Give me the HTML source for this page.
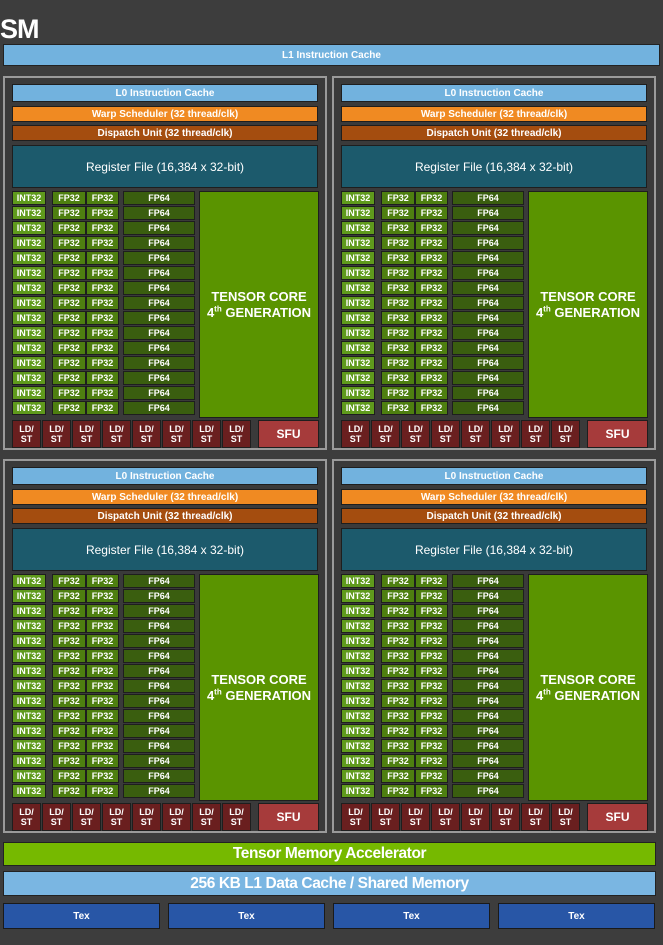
<!DOCTYPE html>
<html><head><meta charset="utf-8"><style>
*{margin:0;padding:0;box-sizing:border-box}
body{width:663px;height:945px;background:#3d3d3d;position:relative;overflow:hidden;font-family:"Liberation Sans",Arial,sans-serif;color:#fff;font-weight:bold}
.a{position:absolute;display:flex;align-items:center;justify-content:center;text-align:center}
.sm{left:0;top:14px;font-size:27px;color:#fff;letter-spacing:-1px}
.l1{left:3px;top:44px;width:657px;height:22px;background:#72b2de;border:1px solid #222;font-size:10px}
.p{position:absolute;width:324px;height:374px;border:2px solid #9a9a9a;background:#3a3a3a}
.p .a{border:1px solid #1e1e1e}
.l0{left:7px;top:6px;width:306px;height:18px;background:#72b2de;font-size:10px}
.ws{left:7px;top:28px;width:306px;height:16px;background:#f08a22;font-size:10px}
.du{left:7px;top:47px;width:306px;height:16px;background:#a44d0f;font-size:10px}
.rf{left:7px;top:67px;width:306px;height:43px;background:#1c5a6c;font-size:12px;font-weight:normal}
.tc{left:194px;top:113px;width:120px;height:227px;background:#5a9400;font-size:13px;line-height:16px}
.tc span{display:block}
.tc sup{font-size:8px;line-height:0}
.g{position:absolute;left:7px;top:113px;display:grid;grid-template-columns:40px 34px 37px 72px;grid-template-rows:repeat(15,14px);row-gap:1px;column-gap:0;background:#3a3a3a}
.g span{display:flex;align-items:center;justify-content:center;font-size:9px;border:1px solid #1e1e1e}
.g .i{background:#5f9a1c;margin-right:6px}
.g .f{background:#4e7f10}
.g .f2{background:#4e7f10;margin-right:4px}
.g .d{background:#3a5e0f}
.ls{top:342px;width:29px;height:28px;background:#6a1f1f;font-size:9px;line-height:10px}
.sfu{left:253px;top:342px;width:61px;height:28px;background:#a63b3b;font-size:12px}
.tma{left:3px;top:842px;width:653px;height:24px;background:#76b900;font-size:15.5px;letter-spacing:-0.4px}
.dc{left:3px;top:871px;width:653px;height:25px;background:#7ab6e2;font-size:15.5px;letter-spacing:-0.4px}
.tx{top:903px;width:157px;height:26px;background:#2856a6;border:1px solid #1a1a1a;font-size:10px}
</style></head><body>
<div class="a sm">SM</div>
<div class="a l1">L1 Instruction Cache</div>

<div class="p" style="left:3px;top:76px">
<div class="a l0">L0 Instruction Cache</div><div class="a ws">Warp Scheduler (32 thread/clk)</div><div class="a du">Dispatch Unit (32 thread/clk)</div><div class="a rf">Register File (16,384 x 32-bit)</div>
<div class="g">
<span class="i">INT32</span><span class="f">FP32</span><span class="f2">FP32</span><span class="d">FP64</span>
<span class="i">INT32</span><span class="f">FP32</span><span class="f2">FP32</span><span class="d">FP64</span>
<span class="i">INT32</span><span class="f">FP32</span><span class="f2">FP32</span><span class="d">FP64</span>
<span class="i">INT32</span><span class="f">FP32</span><span class="f2">FP32</span><span class="d">FP64</span>
<span class="i">INT32</span><span class="f">FP32</span><span class="f2">FP32</span><span class="d">FP64</span>
<span class="i">INT32</span><span class="f">FP32</span><span class="f2">FP32</span><span class="d">FP64</span>
<span class="i">INT32</span><span class="f">FP32</span><span class="f2">FP32</span><span class="d">FP64</span>
<span class="i">INT32</span><span class="f">FP32</span><span class="f2">FP32</span><span class="d">FP64</span>
<span class="i">INT32</span><span class="f">FP32</span><span class="f2">FP32</span><span class="d">FP64</span>
<span class="i">INT32</span><span class="f">FP32</span><span class="f2">FP32</span><span class="d">FP64</span>
<span class="i">INT32</span><span class="f">FP32</span><span class="f2">FP32</span><span class="d">FP64</span>
<span class="i">INT32</span><span class="f">FP32</span><span class="f2">FP32</span><span class="d">FP64</span>
<span class="i">INT32</span><span class="f">FP32</span><span class="f2">FP32</span><span class="d">FP64</span>
<span class="i">INT32</span><span class="f">FP32</span><span class="f2">FP32</span><span class="d">FP64</span>
<span class="i">INT32</span><span class="f">FP32</span><span class="f2">FP32</span><span class="d">FP64</span>
</div>
<div class="a tc"><span>TENSOR CORE<br>4<sup>th</sup> GENERATION</span></div>
<div class="a ls" style="left:7px">LD/<br>ST</div><div class="a ls" style="left:37px">LD/<br>ST</div><div class="a ls" style="left:67px">LD/<br>ST</div><div class="a ls" style="left:97px">LD/<br>ST</div><div class="a ls" style="left:127px">LD/<br>ST</div><div class="a ls" style="left:157px">LD/<br>ST</div><div class="a ls" style="left:187px">LD/<br>ST</div><div class="a ls" style="left:217px">LD/<br>ST</div>
<div class="a sfu">SFU</div>
</div>

<div class="p" style="left:332px;top:76px">
<div class="a l0">L0 Instruction Cache</div><div class="a ws">Warp Scheduler (32 thread/clk)</div><div class="a du">Dispatch Unit (32 thread/clk)</div><div class="a rf">Register File (16,384 x 32-bit)</div>
<div class="g">
<span class="i">INT32</span><span class="f">FP32</span><span class="f2">FP32</span><span class="d">FP64</span>
<span class="i">INT32</span><span class="f">FP32</span><span class="f2">FP32</span><span class="d">FP64</span>
<span class="i">INT32</span><span class="f">FP32</span><span class="f2">FP32</span><span class="d">FP64</span>
<span class="i">INT32</span><span class="f">FP32</span><span class="f2">FP32</span><span class="d">FP64</span>
<span class="i">INT32</span><span class="f">FP32</span><span class="f2">FP32</span><span class="d">FP64</span>
<span class="i">INT32</span><span class="f">FP32</span><span class="f2">FP32</span><span class="d">FP64</span>
<span class="i">INT32</span><span class="f">FP32</span><span class="f2">FP32</span><span class="d">FP64</span>
<span class="i">INT32</span><span class="f">FP32</span><span class="f2">FP32</span><span class="d">FP64</span>
<span class="i">INT32</span><span class="f">FP32</span><span class="f2">FP32</span><span class="d">FP64</span>
<span class="i">INT32</span><span class="f">FP32</span><span class="f2">FP32</span><span class="d">FP64</span>
<span class="i">INT32</span><span class="f">FP32</span><span class="f2">FP32</span><span class="d">FP64</span>
<span class="i">INT32</span><span class="f">FP32</span><span class="f2">FP32</span><span class="d">FP64</span>
<span class="i">INT32</span><span class="f">FP32</span><span class="f2">FP32</span><span class="d">FP64</span>
<span class="i">INT32</span><span class="f">FP32</span><span class="f2">FP32</span><span class="d">FP64</span>
<span class="i">INT32</span><span class="f">FP32</span><span class="f2">FP32</span><span class="d">FP64</span>
</div>
<div class="a tc"><span>TENSOR CORE<br>4<sup>th</sup> GENERATION</span></div>
<div class="a ls" style="left:7px">LD/<br>ST</div><div class="a ls" style="left:37px">LD/<br>ST</div><div class="a ls" style="left:67px">LD/<br>ST</div><div class="a ls" style="left:97px">LD/<br>ST</div><div class="a ls" style="left:127px">LD/<br>ST</div><div class="a ls" style="left:157px">LD/<br>ST</div><div class="a ls" style="left:187px">LD/<br>ST</div><div class="a ls" style="left:217px">LD/<br>ST</div>
<div class="a sfu">SFU</div>
</div>

<div class="p" style="left:3px;top:459px">
<div class="a l0">L0 Instruction Cache</div><div class="a ws">Warp Scheduler (32 thread/clk)</div><div class="a du">Dispatch Unit (32 thread/clk)</div><div class="a rf">Register File (16,384 x 32-bit)</div>
<div class="g">
<span class="i">INT32</span><span class="f">FP32</span><span class="f2">FP32</span><span class="d">FP64</span>
<span class="i">INT32</span><span class="f">FP32</span><span class="f2">FP32</span><span class="d">FP64</span>
<span class="i">INT32</span><span class="f">FP32</span><span class="f2">FP32</span><span class="d">FP64</span>
<span class="i">INT32</span><span class="f">FP32</span><span class="f2">FP32</span><span class="d">FP64</span>
<span class="i">INT32</span><span class="f">FP32</span><span class="f2">FP32</span><span class="d">FP64</span>
<span class="i">INT32</span><span class="f">FP32</span><span class="f2">FP32</span><span class="d">FP64</span>
<span class="i">INT32</span><span class="f">FP32</span><span class="f2">FP32</span><span class="d">FP64</span>
<span class="i">INT32</span><span class="f">FP32</span><span class="f2">FP32</span><span class="d">FP64</span>
<span class="i">INT32</span><span class="f">FP32</span><span class="f2">FP32</span><span class="d">FP64</span>
<span class="i">INT32</span><span class="f">FP32</span><span class="f2">FP32</span><span class="d">FP64</span>
<span class="i">INT32</span><span class="f">FP32</span><span class="f2">FP32</span><span class="d">FP64</span>
<span class="i">INT32</span><span class="f">FP32</span><span class="f2">FP32</span><span class="d">FP64</span>
<span class="i">INT32</span><span class="f">FP32</span><span class="f2">FP32</span><span class="d">FP64</span>
<span class="i">INT32</span><span class="f">FP32</span><span class="f2">FP32</span><span class="d">FP64</span>
<span class="i">INT32</span><span class="f">FP32</span><span class="f2">FP32</span><span class="d">FP64</span>
</div>
<div class="a tc"><span>TENSOR CORE<br>4<sup>th</sup> GENERATION</span></div>
<div class="a ls" style="left:7px">LD/<br>ST</div><div class="a ls" style="left:37px">LD/<br>ST</div><div class="a ls" style="left:67px">LD/<br>ST</div><div class="a ls" style="left:97px">LD/<br>ST</div><div class="a ls" style="left:127px">LD/<br>ST</div><div class="a ls" style="left:157px">LD/<br>ST</div><div class="a ls" style="left:187px">LD/<br>ST</div><div class="a ls" style="left:217px">LD/<br>ST</div>
<div class="a sfu">SFU</div>
</div>

<div class="p" style="left:332px;top:459px">
<div class="a l0">L0 Instruction Cache</div><div class="a ws">Warp Scheduler (32 thread/clk)</div><div class="a du">Dispatch Unit (32 thread/clk)</div><div class="a rf">Register File (16,384 x 32-bit)</div>
<div class="g">
<span class="i">INT32</span><span class="f">FP32</span><span class="f2">FP32</span><span class="d">FP64</span>
<span class="i">INT32</span><span class="f">FP32</span><span class="f2">FP32</span><span class="d">FP64</span>
<span class="i">INT32</span><span class="f">FP32</span><span class="f2">FP32</span><span class="d">FP64</span>
<span class="i">INT32</span><span class="f">FP32</span><span class="f2">FP32</span><span class="d">FP64</span>
<span class="i">INT32</span><span class="f">FP32</span><span class="f2">FP32</span><span class="d">FP64</span>
<span class="i">INT32</span><span class="f">FP32</span><span class="f2">FP32</span><span class="d">FP64</span>
<span class="i">INT32</span><span class="f">FP32</span><span class="f2">FP32</span><span class="d">FP64</span>
<span class="i">INT32</span><span class="f">FP32</span><span class="f2">FP32</span><span class="d">FP64</span>
<span class="i">INT32</span><span class="f">FP32</span><span class="f2">FP32</span><span class="d">FP64</span>
<span class="i">INT32</span><span class="f">FP32</span><span class="f2">FP32</span><span class="d">FP64</span>
<span class="i">INT32</span><span class="f">FP32</span><span class="f2">FP32</span><span class="d">FP64</span>
<span class="i">INT32</span><span class="f">FP32</span><span class="f2">FP32</span><span class="d">FP64</span>
<span class="i">INT32</span><span class="f">FP32</span><span class="f2">FP32</span><span class="d">FP64</span>
<span class="i">INT32</span><span class="f">FP32</span><span class="f2">FP32</span><span class="d">FP64</span>
<span class="i">INT32</span><span class="f">FP32</span><span class="f2">FP32</span><span class="d">FP64</span>
</div>
<div class="a tc"><span>TENSOR CORE<br>4<sup>th</sup> GENERATION</span></div>
<div class="a ls" style="left:7px">LD/<br>ST</div><div class="a ls" style="left:37px">LD/<br>ST</div><div class="a ls" style="left:67px">LD/<br>ST</div><div class="a ls" style="left:97px">LD/<br>ST</div><div class="a ls" style="left:127px">LD/<br>ST</div><div class="a ls" style="left:157px">LD/<br>ST</div><div class="a ls" style="left:187px">LD/<br>ST</div><div class="a ls" style="left:217px">LD/<br>ST</div>
<div class="a sfu">SFU</div>
</div>

<div class="a tma" style="border:1px solid #222">Tensor Memory Accelerator</div>
<div class="a dc" style="border:1px solid #222">256 KB L1 Data Cache / Shared Memory</div>
<div class="a tx" style="left:3px">Tex</div>
<div class="a tx" style="left:168px">Tex</div>
<div class="a tx" style="left:333px">Tex</div>
<div class="a tx" style="left:498px">Tex</div>
</body></html>
